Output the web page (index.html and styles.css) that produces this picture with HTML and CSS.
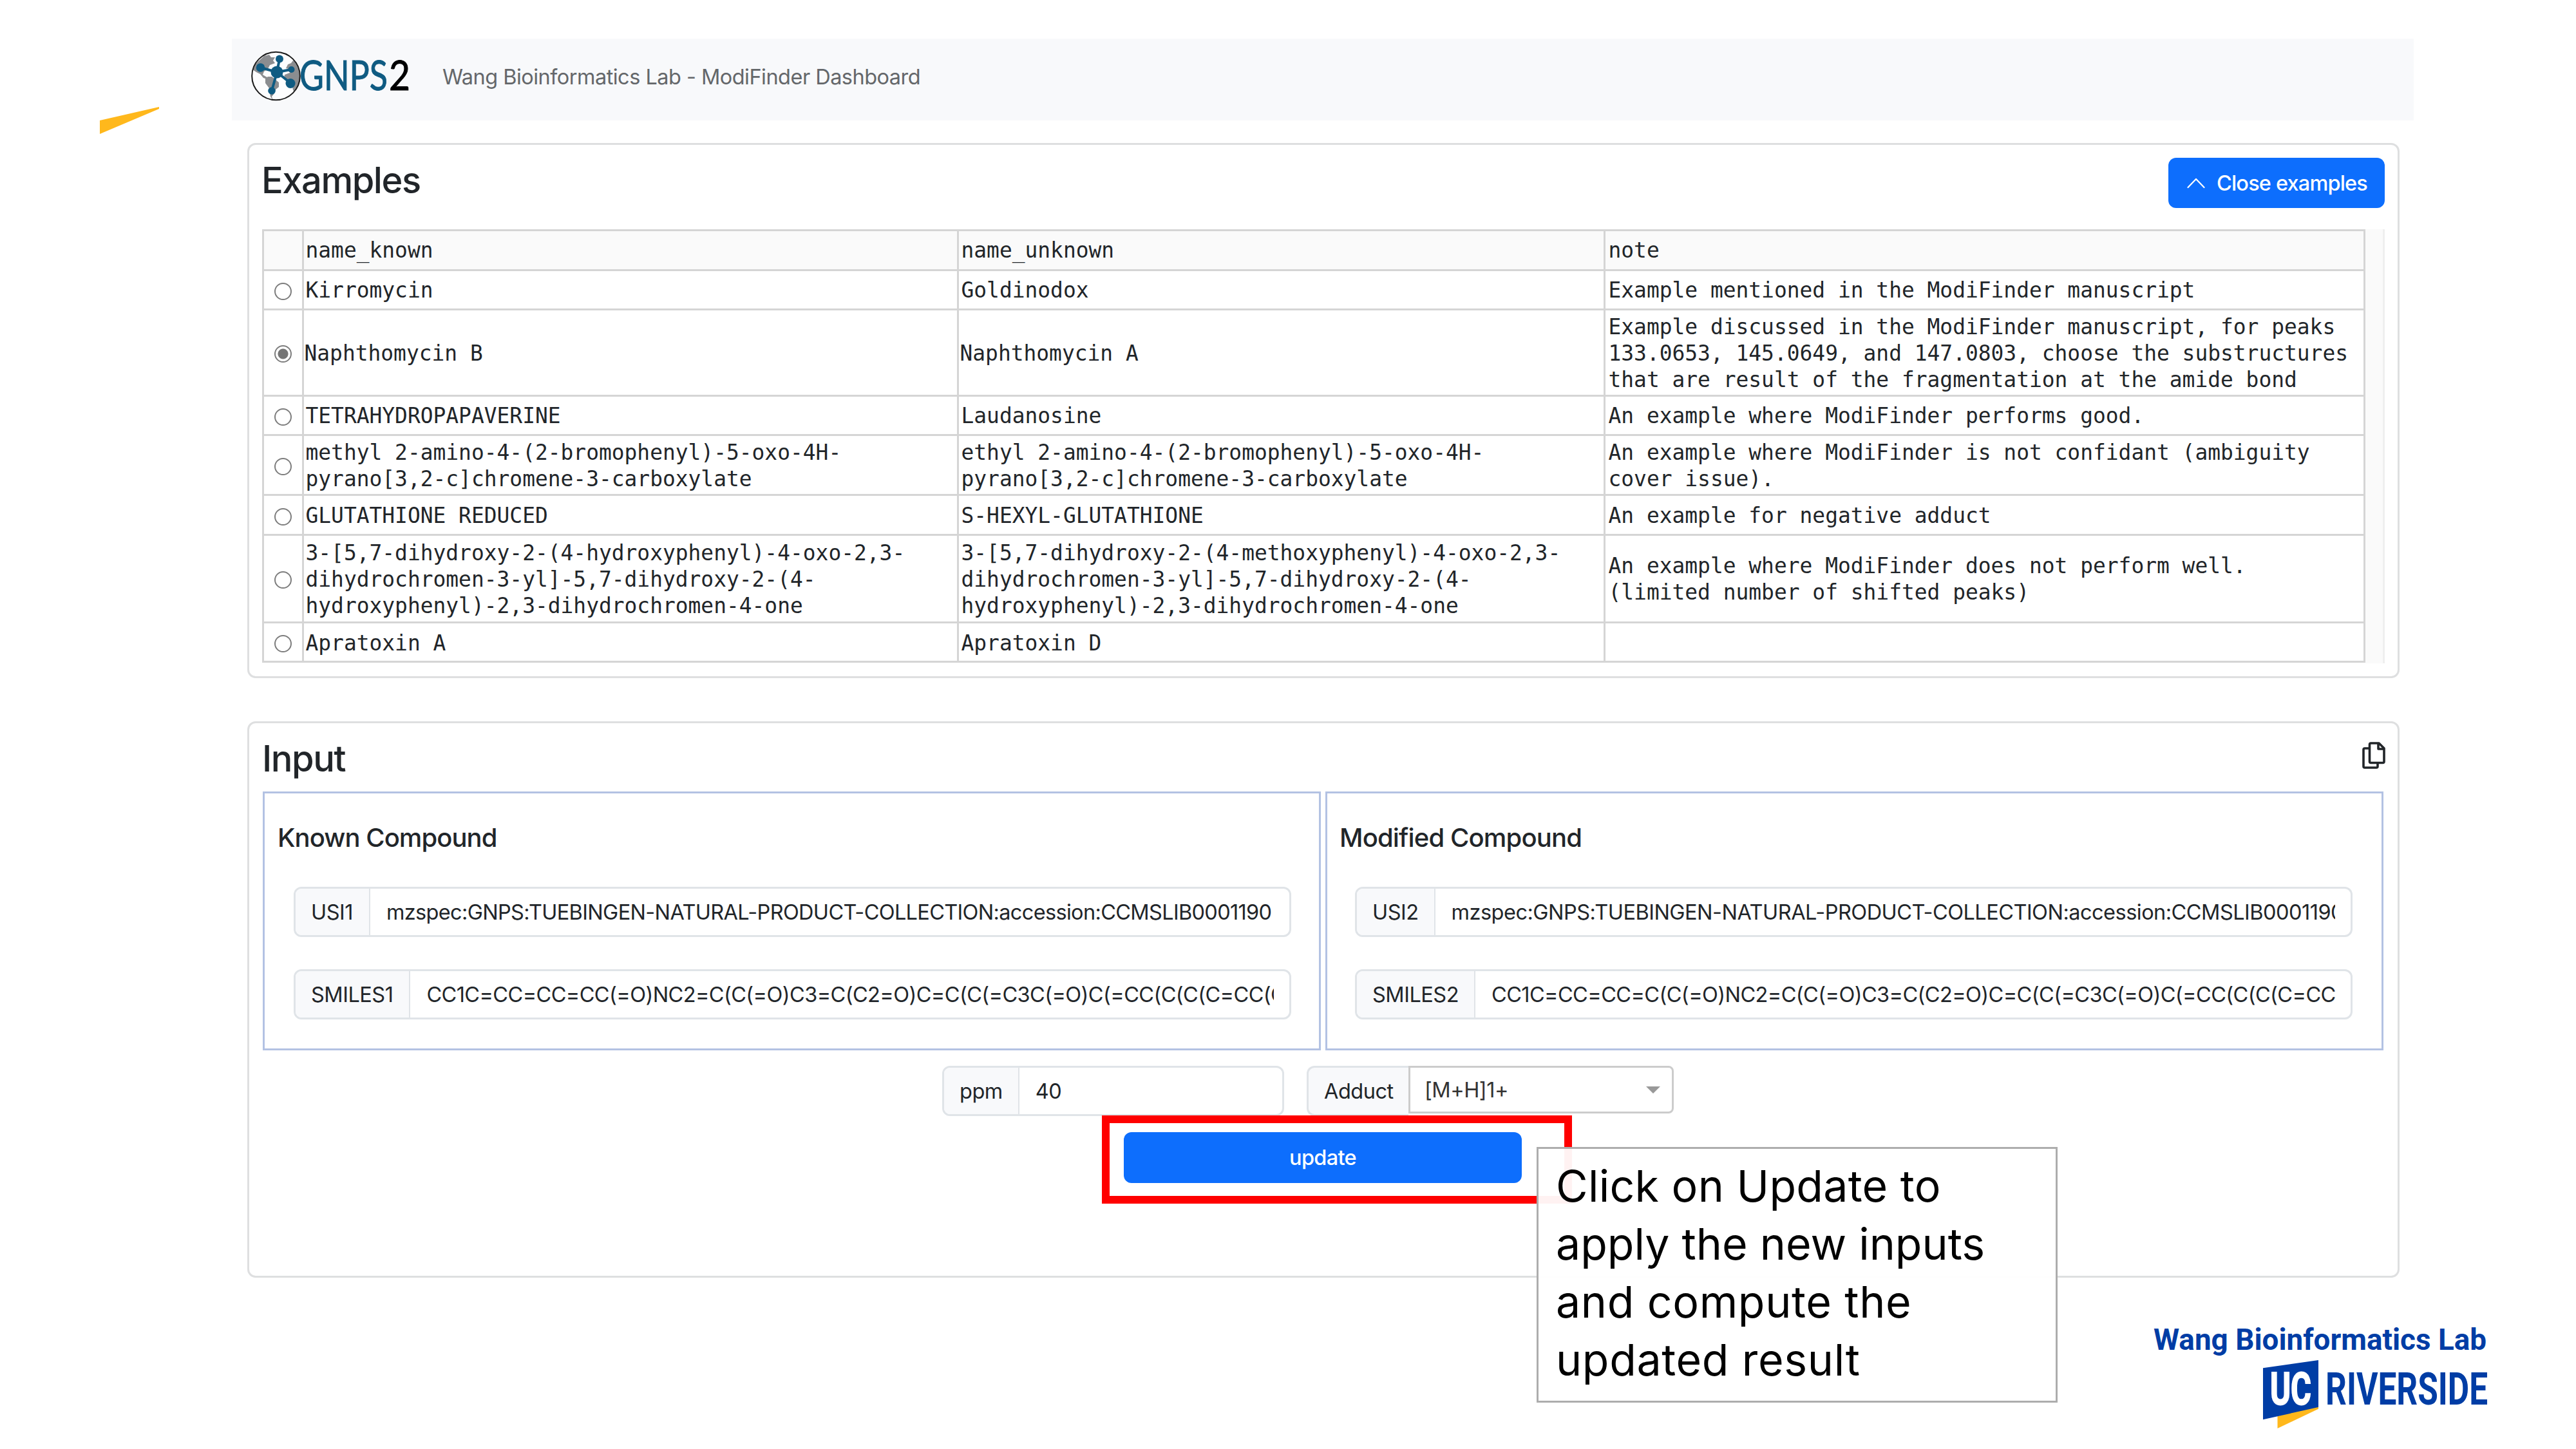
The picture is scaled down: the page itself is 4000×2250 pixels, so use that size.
FILE: index.html
```html
<!DOCTYPE html>
<html lang="en">
<head>
<meta charset="utf-8">
<title>ModiFinder Dashboard</title>
<link rel="stylesheet" href="styles.css">
</head>
<body>
<div class="slide">
  <main class="app">
    <header class="navbar">
      <svg class="gnps" width="250" height="80" viewBox="0 0 250 80">
        <clipPath id="globe"><circle cx="40.500" cy="40" r="37"/></clipPath>
        <circle cx="40.500" cy="40" r="37.300" fill="#fdfdfe"/>
        <g clip-path="url(#globe)" fill="#8b8d90">
          <path d="M8 22 22 9l8-2 3 4 6 0-3 5 3 4-8 3-3 6-6 4-2 5 5 3 6 3-1 2-9-3-5-6-6-3-6-4z"/>
          <path d="M24 44l4-3 6 0 5 4 6 5 0 7-5 4-2 6-4 5 2 6-4-6-2-13-6-8z"/>
          <path d="M54 38l8-3 2-5-8-2 3-6 5-2 3-4 6 4 6 12v16l-7 18-5-4-2-12-8-3-4-4z"/>
        </g>
        <circle cx="40.500" cy="40" r="37.300" fill="none" stroke="#1b1b1b" stroke-width="2"/>
        <g stroke="#0f5b82" stroke-width="4"><path d="M42 34 46 14M42 34 17 27M42 34 64 30M42 34 63 51M42 34 34 63"/></g>
        <g fill="#0f5b82"><circle cx="42" cy="34" r="9.500"/><circle cx="46" cy="13.500" r="6"/><circle cx="16.500" cy="27" r="6.800"/><circle cx="64.500" cy="30" r="5"/><circle cx="63" cy="51.500" r="7.500"/><circle cx="34" cy="63" r="5.800"/></g>
        <text class="gnps-name" x="77" y="61.500" textLength="137" lengthAdjust="spacingAndGlyphs">GNPS</text>
        <text class="gnps-two" x="216" y="61.500" textLength="33" lengthAdjust="spacingAndGlyphs">2</text>
      </svg>
      <span class="brand">Wang Bioinformatics Lab - ModiFinder Dashboard</span>
    </header>

    <section class="card examples">
      <div class="card-head">
        <h2>Examples</h2>
        <button class="btn toggle"><svg width="28" height="18" viewBox="0 0 28 18"><path d="M1.500 16 14 3 26.500 16" fill="none" stroke="#fff" stroke-width="2.200" stroke-linecap="round" stroke-linejoin="round"/></svg><span>Close examples</span></button>
      </div>
      <div class="table-wrap">
        <table>
          <colgroup><col class="c0"><col class="c1"><col class="c2"><col class="c3"></colgroup>
          <tr class="r1 th"><td></td><td>name_known</td><td>name_unknown</td><td>note</td></tr>
          <tr class="r1"><td><i class="radio"></i></td><td>Kirromycin</td><td>Goldinodox</td><td>Example mentioned in the ModiFinder manuscript</td></tr>
          <tr class="r3 sel"><td><i class="radio on"></i></td><td>Naphthomycin B</td><td>Naphthomycin A</td><td>Example discussed in the ModiFinder manuscript, for peaks<br>133.0653, 145.0649, and 147.0803, choose the substructures<br>that are result of the fragmentation at the amide bond</td></tr>
          <tr class="r1"><td><i class="radio"></i></td><td>TETRAHYDROPAPAVERINE</td><td>Laudanosine</td><td>An example where ModiFinder performs good.</td></tr>
          <tr class="r2"><td><i class="radio"></i></td><td>methyl 2-amino-4-(2-bromophenyl)-5-oxo-4H-<br>pyrano[3,2-c]chromene-3-carboxylate</td><td>ethyl 2-amino-4-(2-bromophenyl)-5-oxo-4H-<br>pyrano[3,2-c]chromene-3-carboxylate</td><td>An example where ModiFinder is not confidant (ambiguity<br>cover issue).</td></tr>
          <tr class="r1"><td><i class="radio"></i></td><td>GLUTATHIONE REDUCED</td><td>S-HEXYL-GLUTATHIONE</td><td>An example for negative adduct</td></tr>
          <tr class="r3b"><td><i class="radio"></i></td><td>3-[5,7-dihydroxy-2-(4-hydroxyphenyl)-4-oxo-2,3-<br>dihydrochromen-3-yl]-5,7-dihydroxy-2-(4-<br>hydroxyphenyl)-2,3-dihydrochromen-4-one</td><td>3-[5,7-dihydroxy-2-(4-methoxyphenyl)-4-oxo-2,3-<br>dihydrochromen-3-yl]-5,7-dihydroxy-2-(4-<br>hydroxyphenyl)-2,3-dihydrochromen-4-one</td><td>An example where ModiFinder does not perform well.<br>(limited number of shifted peaks)</td></tr>
          <tr class="r1"><td><i class="radio"></i></td><td>Apratoxin A</td><td>Apratoxin D</td><td></td></tr>
        </table>
      </div>
    </section>

    <section class="card input">
      <div class="card-head">
        <h2>Input</h2>
        <svg class="copy" width="36" height="42" viewBox="0 0 36 42" fill="none" stroke="#212529" stroke-width="3.600" stroke-linejoin="round"><path d="M11.500 10H4a2 2 0 0 0-2 2v26a2 2 0 0 0 2 2h18a2 2 0 0 0 2-2v-5"/><path d="M13.500 2H26l8 8v20.500a2 2 0 0 1-2 2H13.500a2 2 0 0 1-2-2V4a2 2 0 0 1 2-2z"/><path d="M25 2v9h9"/></svg>
      </div>
      <div class="compounds">
        <div class="compound">
          <h3>Known Compound</h3>
          <div class="group"><label>USI1</label><div class="field"><span class="usi">mzspec:GNPS:TUEBINGEN-NATURAL-PRODUCT-COLLECTION:accession:CCMSLIB0001190</span></div></div>
          <div class="group"><label>SMILES1</label><div class="field"><span class="smi">CC1C=CC=CC=CC(=O)NC2=C(C(=O)C3=C(C2=O)C=C(C(=C3C(=O)C(=CC(C(C(C=CC(C</span></div></div>
        </div>
        <div class="compound modified">
          <h3>Modified Compound</h3>
          <div class="group"><label>USI2</label><div class="field"><span class="usi">mzspec:GNPS:TUEBINGEN-NATURAL-PRODUCT-COLLECTION:accession:CCMSLIB0001190</span></div></div>
          <div class="group"><label>SMILES2</label><div class="field"><span class="smi">CC1C=CC=CC=C(C(=O)NC2=C(C(=O)C3=C(C2=O)C=C(C(=C3C(=O)C(=CC(C(C(C=CC</span></div></div>
        </div>
      </div>
      <div class="params">
        <div class="group ppm"><label>ppm</label><div class="field"><span>40</span></div></div>
        <div class="group adduct"><label>Adduct</label><div class="select"><span>[M+H]1+</span><i class="caret"></i></div></div>
      </div>
      <button class="btn update">update</button>
    </section>
  </main>

  <svg class="accent" width="92" height="42" viewBox="0 0 92 42"><path d="M0 21 92 0v3L0 42z" fill="#ffb81c"/></svg>
  <div class="highlight"></div>
  <div class="callout">Click on Update to<br><span class="tight">apply the new inputs</span><br><span class="loose">and compute the</span><br><span class="loose">updated result</span></div>
  <svg class="ucr" width="540" height="180" viewBox="3340 2050 540 180">
    <text class="lab" x="3344" y="2096" textLength="517" lengthAdjust="spacingAndGlyphs">Wang Bioinformatics Lab</text>
    <path d="M3536.500 2199 3600 2183v4.700L3536.500 2218z" fill="#ffb81c"/>
    <path d="M3514 2124.300 3600 2112v73l-86 19.300z" fill="#003da5"/>
    <text class="uc" x="3525" y="2181" textLength="64" lengthAdjust="spacingAndGlyphs">UC</text>
    <text class="riv" x="3611" y="2181" textLength="252" lengthAdjust="spacingAndGlyphs">RIVERSIDE</text>
  </svg>
</div>
</body>
</html>
```
FILE: styles.css
```css
* { box-sizing: border-box; }
body { margin: 0; background: #fff; }
.slide { position: relative; width: 4000px; height: 2250px; overflow: hidden; font-family: Inter, "Liberation Sans", sans-serif; font-size: 32.5px; color: #212529; }
.app { padding: 60px 252px 0 360px; }
.navbar { height: 127px; background: #f8f9fb; display: flex; align-items: flex-start; padding: 18px 0 0 28px; }
.gnps { display: block; flex: none; }
.gnps-name { font: 400 64px Lato, sans-serif; fill: #0f5b82; stroke: #0f5b82; stroke-width: 1px; }
.gnps-two { font: 400 64px Lato, sans-serif; fill: #000; stroke: #000; stroke-width: 1px; }
.brand { margin-left: 49px; line-height: 40px; padding-top: 22px; color: #64676a; letter-spacing: -0.530px; white-space: nowrap; }

.card { width: 3342px; margin-left: 24px; border: 3px solid #dedfe0; border-radius: 13px; background: #fff; }
.examples { height: 831px; margin-top: 35px; padding: 20px 20px 0 20px; }
.input { height: 864px; margin-top: 67px; padding: 20px 22px 0 21px; }
.card-head { display: flex; justify-content: space-between; align-items: flex-start; }
h2 { margin: 0 0 0 -1px; padding-top: 3px; font-size: 56px; line-height: 65px; font-weight: 500; letter-spacing: -1.450px; }
.btn { border: 0; border-radius: 12px; background: #0d6efd; color: #fff; font: 500 32.500px Inter, sans-serif; letter-spacing: -0.700px; height: 78px; display: flex; align-items: center; justify-content: center; padding: 0; }
.toggle { width: 336px; gap: 18px; justify-content: flex-start; padding-left: 29px; white-space: nowrap; letter-spacing: -0.830px; }

.table-wrap { width: 3296px; height: 674px; margin-top: 33px; background: #fafafa; border-right: 3px solid #efefef; }
table { width: 3266px; table-layout: fixed; border-collapse: collapse; background: #fff; font: 32.900px/41.200px "DejaVu Sans Mono", monospace; }
.c0 { width: 61.500px; } .c1 { width: 1017px; } .c2 { width: 1004px; }
td { border: 3px solid #d5d5d5; padding: 2px 0 0 3px; vertical-align: middle; white-space: nowrap; }
td:nth-child(3) { padding-left: 4px; }
td:nth-child(4) { padding-left: 5px; }
td:first-child { padding: 0; }
.th td { background: #fafafa; padding-top: 0; }
.r1 { height: 61.600px; } .r2 { height: 93px; } .r3 { height: 133.500px; } .r3b { height: 136px; }
.sel td:nth-child(2) { padding-left: 1px; }
.sel td:nth-child(3) { padding-left: 2px; }
.radio { display: block; width: 27px; height: 27px; margin: 5px auto 0; border: 2px solid #7d7d7d; border-radius: 50%; background: #fff; }
.radio.on { background: radial-gradient(circle, #757575 0 7.500px, #fff 8.500px); }

.copy { display: block; margin: 9px -3px 0 0; }
.compounds { display: flex; gap: 7px; margin-top: 18px; }
.compound { width: 1643px; height: 402px; border: 3px solid #b3c2e3; padding: 44px 43px 0 45px; }
.modified { padding: 44px 45px 0 43px; }
h3 { margin: 0 0 0 -25px; font-size: 40px; line-height: 50px; font-weight: 500; letter-spacing: -0.950px; }
.modified h3 { margin-left: -24px; letter-spacing: -0.850px; }
.group { display: flex; height: 78px; border: 3px solid #e0e4e8; border-radius: 12px; overflow: hidden; background: #fff; letter-spacing: -0.500px; }
h3 + .group { margin-top: 51px; }
.group + .group { margin-top: 50px; }
.group label { flex: none; display: flex; align-items: center; padding: 0 25px 0 24px; background: #f8f9fb; border-right: 2px solid #e0e4e8; }
.modified label { padding-right: 24px; }
.field { flex: 1; min-width: 0; margin: 0 24px 0 25px; overflow: hidden; display: flex; align-items: center; white-space: nowrap; }
.usi { letter-spacing: -0.670px; }
.modified .usi { letter-spacing: -0.520px; }
.smi { letter-spacing: -0.600px; }
.params { display: flex; gap: 35px; margin-top: 24px; padding-left: 1055px; }
.params .group + .group { margin-top: 0; }
.ppm { width: 531px; }
.ppm label { padding-right: 24px; }
.adduct { width: 570px; border: 0; border-radius: 12px 0 0 12px; overflow: visible; }
.adduct label { width: 158px; border: 3px solid #e0e4e8; border-right: 0; border-radius: 12px 0 0 12px; }
.select { flex: 1; height: 74px; border: 3px solid #ccc; border-radius: 0 8px 8px 0; display: flex; align-items: center; justify-content: space-between; padding: 0 18px 0 22px; color: #333; }
.caret { border: 11px solid transparent; border-top-color: #999; border-bottom: 0; }
.update { width: 618px; margin: 25px 0 0 1337px; height: 79px; }

.accent { position: absolute; left: 155px; top: 166px; }
.highlight { position: absolute; left: 1711px; top: 1732px; width: 730px; height: 137px; border: 12px solid #f00; }
.callout { position: absolute; left: 2386px; top: 1781px; width: 809px; height: 397px; border: 3px solid #adadad; background: rgba(255,255,255,.95); padding: 12px 0 0 27px; font-size: 68px; line-height: 90px; color: #000; white-space: nowrap; letter-spacing: 0.280px; }
.tight { letter-spacing: 0; }
.loose { letter-spacing: 0.650px; }
.ucr { position: absolute; left: 3340px; top: 2050px; }
.lab { font: 700 47px Roboto, sans-serif; fill: #003da5; }
.uc { font: 700 70px Roboto, sans-serif; fill: #fff; stroke: #fff; stroke-width: 2px; }
.riv { font: 700 70px Roboto, sans-serif; fill: #003da5; }
```
